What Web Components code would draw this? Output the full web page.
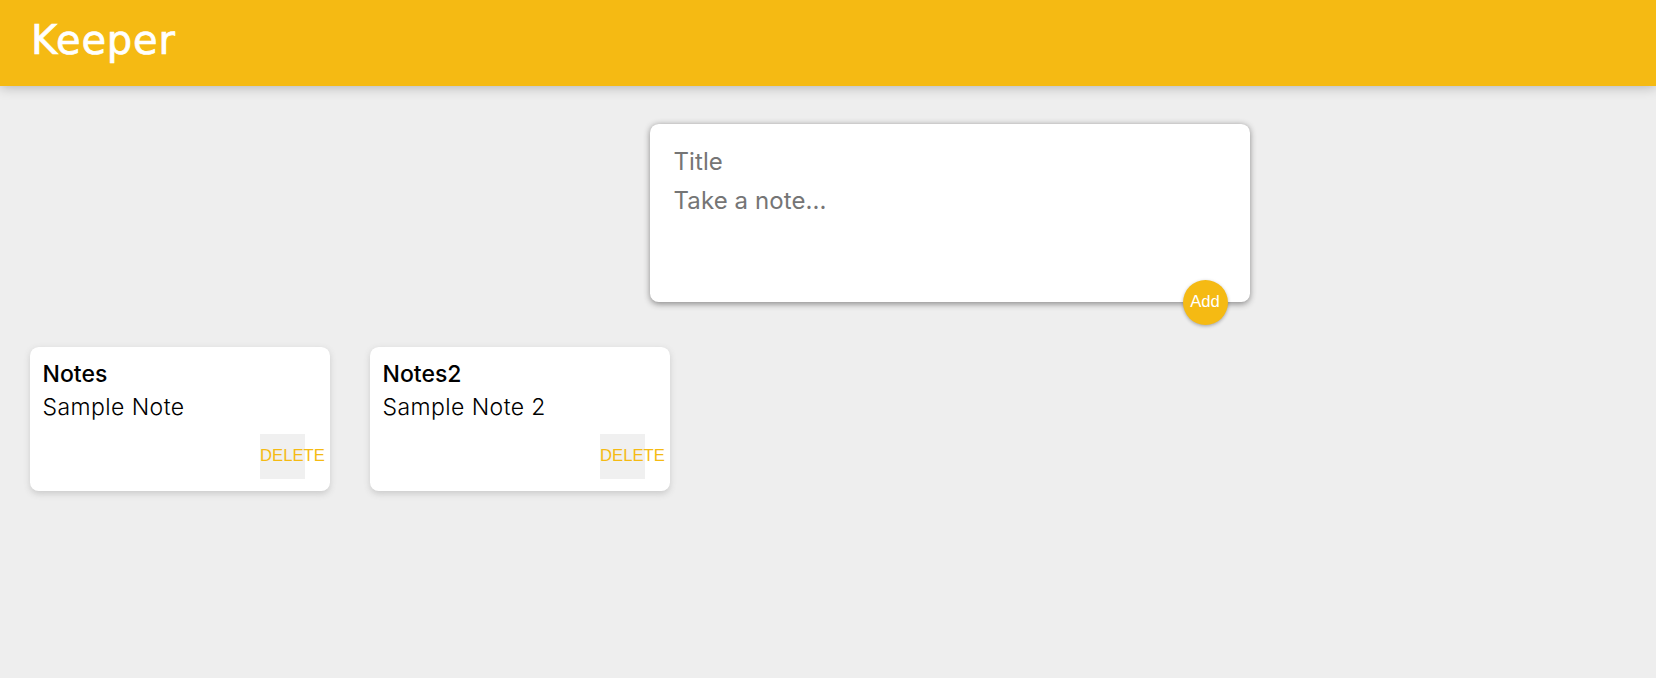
<!DOCTYPE html>
<html>
<head>
<meta charset="utf-8">
<title>Keeper</title>
<style>
  html, body { margin: 0; padding: 0; }
  body { background: #eee; font-family: "Inter", "Liberation Sans", sans-serif; height: 678px; overflow: hidden; }
</style>
</head>
<body>
<keeper-app>
  <keeper-header>Keeper</keeper-header>
  <create-area>
    <span slot="title">Title</span>
    <span slot="content">Take a note...</span>
  </create-area>
  <note-list>
    <note-card>
      <span slot="title">Notes</span>
      <span slot="content">Sample Note</span>
    </note-card>
    <note-card>
      <span slot="title">Notes2</span>
      <span slot="content">Sample Note 2</span>
    </note-card>
  </note-list>
</keeper-app>

<script>
  // Small helper so each element only has to give its markup
  function shadowTemplate(html)
  {
    const template = document.createElement("template");
    template.innerHTML = html;
    return template;
  }

  const appTemplate = shadowTemplate(`
    <style>
      :host { display: block; }
    </style>
    <slot></slot>
  `);

  const headerTemplate = shadowTemplate(`
    <style>
      :host
      {
        display: block;
        height: 86px;
        padding: 0 31px;
        box-sizing: border-box;
        background-color: #f5ba13;
        box-shadow: 0 0 12.5px 0 rgba(0, 0, 0, .3);
      }
      h1
      {
        margin: 0;
        padding-top: 17px;
        color: #fff;
        font-family: "DejaVu Sans", sans-serif;
        font-size: 40px;
        font-weight: 400;
        line-height: 47px;
        letter-spacing: .8px;
        -webkit-text-stroke: .7px #fff;
      }
    </style>
    <h1><slot></slot></h1>
  `);

  const createTemplate = shadowTemplate(`
    <style>
      :host
      {
        display: block;
        position: relative;
        box-sizing: border-box;
        width: 600px;
        height: 178px;
        margin: 38px 0 45px 650px;
        padding: 18px 23.5px;
        background: #fff;
        border-radius: 8.75px;
        box-shadow: 0 1.25px 6.25px #8a8989;
        color: #757575;
        font-size: 24px;
        letter-spacing: .1px;
      }
      .line { display: block; height: 39px; line-height: 39px; }
      button
      {
        position: absolute;
        right: 22.5px;
        bottom: -22.5px;
        width: 45px;
        height: 45px;
        padding: 0;
        border: none;
        border-radius: 50%;
        background: #f5ba13;
        color: #fff;
        font-family: "Liberation Sans", sans-serif;
        font-size: 16.67px;
        box-shadow: 0 1.25px 3.75px rgba(0, 0, 0, .3);
      }
    </style>
    <div class="line"><slot name="title"></slot></div>
    <div class="line"><slot name="content"></slot></div>
    <button>Add</button>
  `);

  const listTemplate = shadowTemplate(`
    <style>
      :host
      {
        display: flex;
        gap: 40px;
        padding-left: 30px;
      }
    </style>
    <slot></slot>
  `);

  const noteTemplate = shadowTemplate(`
    <style>
      :host
      {
        display: block;
        box-sizing: border-box;
        width: 300px;
        height: 144px;
        padding: 12.5px;
        background: #fff;
        border-radius: 8.75px;
        box-shadow: 0 2.5px 6.25px #ccc;
        color: #000;
      }
      h1
      {
        margin: 1px 0 5px;
        font-size: 23px;
        font-weight: 500;
        line-height: 27px;
      }
      p
      {
        margin: 0;
        font-size: 23px;
        font-weight: 300;
        line-height: 28px;
        letter-spacing: .42px;
      }
      div { display: flex; justify-content: flex-end; margin-top: 13px; padding-right: 12.5px; }
      button
      {
        width: 45px;
        height: 45px;
        padding: 0 0 1px;
        border: none;
        background: #f0f0f0;
        color: #f5ba13;
        font-family: "Liberation Sans", sans-serif;
        font-size: 16.67px;
        text-align: left;
        white-space: nowrap;
      }
    </style>
    <h1><slot name="title"></slot></h1>
    <p><slot name="content"></slot></p>
    <div><button>DELETE</button></div>
  `);

  function defineSimple(name, template)
  {
    customElements.define(name, class extends HTMLElement {
      constructor()
      {
        super();
        this.attachShadow({mode: "open"});
        this.shadowRoot.appendChild(template.content.cloneNode(true));
      }
    });
  }

  defineSimple("keeper-app", appTemplate);
  defineSimple("keeper-header", headerTemplate);
  defineSimple("create-area", createTemplate);
  defineSimple("note-list", listTemplate);
  defineSimple("note-card", noteTemplate);
</script>
</body>
</html>
